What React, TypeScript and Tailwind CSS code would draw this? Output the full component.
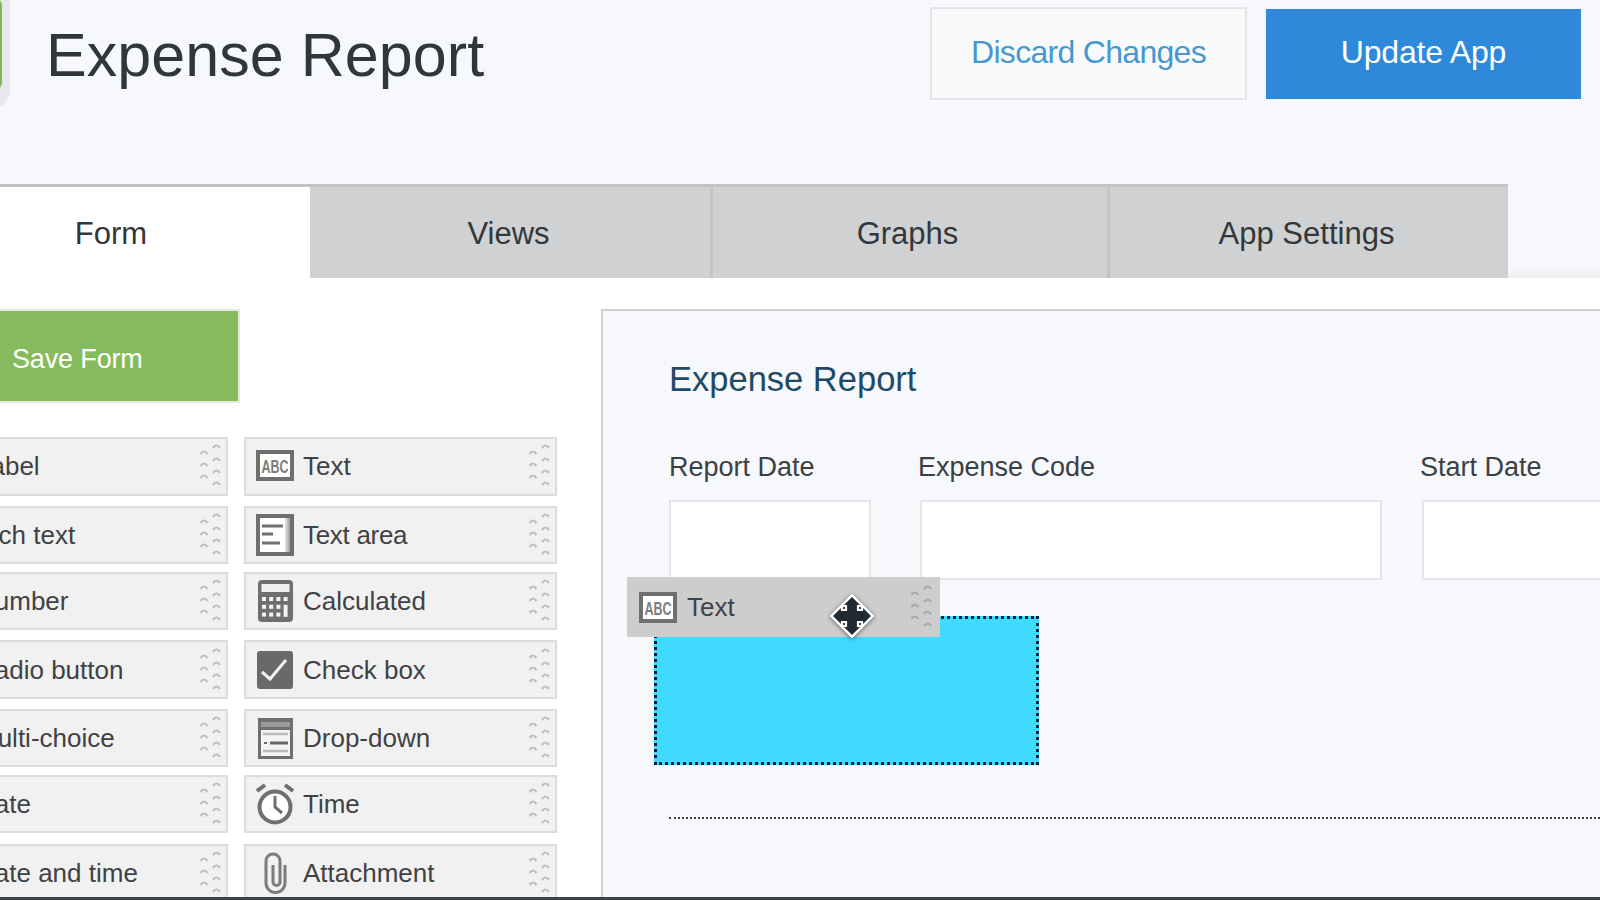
import React from "react";

const Grip = ({ dark }: { dark?: boolean }) => (
  <svg width="21" height="46" viewBox="0 0 21 46" fill="none" stroke={dark ? "#a9a9a9" : "#bfbfbf"} strokeWidth="2.2" className="shrink-0 blur-[0.3px]">
    <path d="M0.500 11 Q4 6 7.500 11M0.500 23 Q4 18 7.500 23M0.500 35 Q4 30 7.500 35M13 5 Q16.500 0 20 5M13 18 Q16.500 13 20 18M13 30 Q16.500 25 20 30M13 42 Q16.500 37 20 42" />
  </svg>
);

const AbcIcon = () => (
  <svg width="38" height="31" viewBox="0 0 38 31">
    <rect x="2" y="2" width="34" height="27" fill="#fff" stroke="#6f6f6f" strokeWidth="4" />
    <text x="19" y="22.500" textAnchor="middle" fontFamily="'Liberation Sans', sans-serif" fontWeight="700" fontSize="18" textLength="27" lengthAdjust="spacingAndGlyphs" fill="#7d7d7d">ABC</text>
  </svg>
);

const TextAreaIcon = () => (
  <svg width="38" height="42" viewBox="0 0 38 42">
    <defs>
      <linearGradient id="ta" x1="0" x2="1" y1="0" y2="0">
        <stop offset="0" stopColor="#e8e8e8" />
        <stop offset="1" stopColor="#9a9a9a" />
      </linearGradient>
    </defs>
    <rect x="2" y="2" width="34" height="38" fill="#fff" stroke="#6f6f6f" strokeWidth="4" />
    <rect x="29" y="4" width="5" height="34" fill="url(#ta)" />
    <path d="M6 12H27M6 20H17M6 29H24" stroke="#6f6f6f" strokeWidth="3" />
  </svg>
);

const CalcIcon = () => {
  const dots: React.ReactNode[] = [];
  for (let r = 0; r < 3; r++)
    for (let c = 0; c < 4; c++) {
      if (c === 3 && r > 0) continue;
      dots.push(<rect key={`${r}-${c}`} x={4 + c * 7.2} y={17 + r * 7.8} width="4" height="4" fill="#f4f4f4" />);
    }
  return (
    <svg width="35" height="42" viewBox="0 0 35 42">
      <rect width="35" height="42" rx="4" fill="#6f6f6f" />
      <rect x="3.500" y="4" width="28" height="8" fill="#f0f0f0" />
      {dots}
      <rect x="25.600" y="24.800" width="4" height="12" fill="#f4f4f4" />
    </svg>
  );
};

const CheckIcon = () => (
  <svg width="36" height="38" viewBox="0 0 36 38">
    <rect width="36" height="38" rx="3" fill="#696969" />
    <path d="M5 21L13 28L29 9" stroke="#f2f2f2" strokeWidth="3" fill="none" />
  </svg>
);

const DropIcon = () => (
  <svg width="35" height="41" viewBox="0 0 35 41">
    <rect width="35" height="41" fill="#6f6f6f" />
    <rect x="3" y="4" width="29" height="5" fill="#999" />
    <rect x="3" y="12" width="29" height="26" fill="#f4f4f4" />
    <path d="M5 16H30M5 33H30" stroke="#bbb" strokeWidth="2.500" />
    <path d="M12 25H30" stroke="#666" strokeWidth="3" />
    <path d="M6 25H9" stroke="#666" strokeWidth="2" />
  </svg>
);

const ClockIcon = () => (
  <svg width="38" height="42" viewBox="0 0 38 42" fill="none" stroke="#6f6f6f">
    <circle cx="19" cy="24" r="15.500" fill="#fff" strokeWidth="4" />
    <path d="M19 13V24L26 30" strokeWidth="3" />
    <path d="M1 8L9 2M37 8L29 2" strokeWidth="4" />
  </svg>
);

const ClipIcon = () => (
  <svg width="23" height="42" viewBox="0 0 23 42" fill="none" stroke="#7c7c7c" strokeWidth="3">
    <path d="M9 13V30A3.500 3.500 0 0 0 16 30V9A7 7 0 0 0 2 9V31A9.500 9.500 0 0 0 21 31V13" />
  </svg>
);

type Item = { label: string; icon?: React.ReactNode; className: string; textClass?: string };

const left: Item[] = [
  { label: "Label", className: "mt-0 h-[59px] pb-[2px]" },
  { label: "Rich text", className: "mt-[10px] h-[58px]", textClass: "-translate-x-[2px]" },
  { label: "Number", className: "mt-[8px] h-[58px]" },
  { label: "Radio button", className: "mt-[10px] h-[59px]" },
  { label: "Multi-choice", className: "mt-[10px] h-[58px]" },
  { label: "Date", className: "mt-[8px] h-[58px]" },
  { label: "Date and time", className: "mt-[11px] h-[58px]" },
];

const right: Item[] = [
  { label: "Text", icon: <AbcIcon />, className: "mt-0 h-[59px] pb-[2px]" },
  { label: "Text area", icon: <TextAreaIcon />, className: "mt-[10px] h-[58px]", textClass: "tracking-[-0.3px]" },
  { label: "Calculated", icon: <CalcIcon />, className: "mt-[8px] h-[58px]" },
  { label: "Check box", icon: <CheckIcon />, className: "mt-[10px] h-[59px]" },
  { label: "Drop-down", icon: <DropIcon />, className: "mt-[10px] h-[58px]" },
  { label: "Time", icon: <ClockIcon />, className: "mt-[8px] h-[58px]" },
  { label: "Attachment", icon: <ClipIcon />, className: "mt-[11px] h-[58px]" },
];

const PaletteItem = ({ item }: { item: Item }) => (
  <div className={`flex shrink-0 items-center border-2 border-[#dcdcdc] bg-[#f1f1f1] pl-[10px] pr-[5px] ${item.className}`}>
    <div className="flex w-[38px] shrink-0 justify-center">{item.icon}</div>
    <span className={`ml-[9px] flex-1 whitespace-nowrap text-[26px] leading-none text-[#3f4244] ${item.textClass ?? ""}`}>{item.label}</span>
    <Grip />
  </div>
);

const Field = ({ label, className, labelClass }: { label: string; className: string; labelClass: string }) => (
  <div className={`flex shrink-0 flex-col ${className}`}>
    <div className={`h-[34px] whitespace-nowrap text-[27px] leading-[34px] text-[#3c4043] ${labelClass}`}>{label}</div>
    <div className="mt-[16px] h-[80px] border-2 border-[#e4e6e9] bg-white" />
  </div>
);

export default function App() {
  return (
    <div className="relative flex h-[900px] w-[1600px] flex-col overflow-hidden bg-[#f6f8fb] font-['Liberation_Sans',Arial,sans-serif]">
      {/* Header */}
      <header className="flex h-[184px] shrink-0 items-start">
        <div className="-ml-[70px] -mt-[20px] flex h-[128px] w-[80px] shrink-0 items-center justify-end rounded-[18px] bg-[#e6e8ea] pr-[8px]">
          <div className="h-[90px] w-[40px] rounded-[6px] bg-[#7fb955]" />
        </div>
        <h1 className="ml-[36px] mt-[25px] whitespace-nowrap text-[61px] font-normal leading-[60px] tracking-[0.05px] text-[#30363b]">Expense Report</h1>
        <div className="ml-auto mr-[19px] mt-[7px] flex items-center gap-[19px]">
          <button className="h-[93px] w-[317px] border-2 border-[#e3e5e8] bg-[#f8fafc] pb-[4px] text-[32px] tracking-[-0.7px] text-[#4898cf]">Discard Changes</button>
          <button className="h-[90px] w-[315px] bg-[#2f89da] pb-[4px] text-[32px] tracking-[-0.2px] text-white">Update App</button>
        </div>
      </header>

      {/* Tabs */}
      <nav className="flex h-[94px] shrink-0 text-[31px] text-[#33373a]">
        <div className="flex w-[310px] items-center justify-center border-t-[3px] border-[#c0c2c3] bg-white pr-[88px] pt-[3px]">Form</div>
        <div className="flex w-[400px] items-center justify-center border-t-[3px] border-[#c0c2c3] bg-[#d0d1d2] pr-[3px] pt-[3px]">Views</div>
        <div className="flex w-[397px] items-center justify-center border-t-[3px] border-l-[3px] border-[#c3c4c5] bg-[#d0d1d2] pr-[5px] pt-[3px]">Graphs</div>
        <div className="flex w-[401px] items-center justify-center border-t-[3px] border-l-[3px] border-[#c3c4c5] bg-[#d0d1d2] pr-[5px] pt-[3px]">App Settings</div>
        <div className="h-[10px] flex-1 self-end bg-gradient-to-b from-[#f6f8fb] to-[#eceeef]" />
      </nav>

      {/* Body */}
      <main className="flex min-h-0 flex-1 bg-white pt-[31px]">
        {/* Palette */}
        <aside className="flex w-[601px] shrink-0 flex-col">
          <button className="flex h-[94px] w-[240px] shrink-0 items-center border-2 border-l-0 border-[#e4ebde] bg-[#85bb5d] pl-[12px] pt-[6px] text-[27px] tracking-[-0.15px] text-white">Save Form</button>
          <div className="ml-[-83px] mt-[34px] flex gap-[16px]">
            <div className="flex w-[311px] shrink-0 flex-col">
              {left.map((i) => (
                <PaletteItem key={i.label} item={i} />
              ))}
            </div>
            <div className="flex w-[313px] shrink-0 flex-col">
              {right.map((i) => (
                <PaletteItem key={i.label} item={i} />
              ))}
            </div>
          </div>
        </aside>

        {/* Form panel */}
        <section className="min-w-0 flex-1 border-l-2 border-t-2 border-[#cfd1d3] bg-[#f6f8fb] pl-[66px]">
          <h2 className="mt-[48px] h-[40px] whitespace-nowrap text-[34.500px] font-normal leading-[40px] text-[#1f4a66]">Expense Report</h2>
          <div className="mt-[51px] flex">
            <Field label="Report Date" className="w-[202px]" labelClass="" />
            <Field label="Expense Code" className="ml-[49px] w-[462px]" labelClass="-ml-[2px]" />
            <Field label="Start Date" className="ml-[40px] w-[300px]" labelClass="-ml-[2px]" />
          </div>
          <div className="-ml-[15px] mt-[36px] h-[149px] w-[385px] border-[3px] border-dotted border-[#08233a] bg-[#40daff]" />
          <div className="mt-[52px] border-t-2 border-dotted border-[#3a3f44]" />
        </section>
      </main>

      {/* Dark strip at the bottom edge */}
      <div className="absolute inset-x-0 bottom-0 h-[3px] bg-[#3f4244]" />

      {/* Dragged field */}
      <div className="absolute left-[627px] top-[577px] flex h-[60px] w-[313px] items-center bg-[#cdcdcd] pl-[12px] pr-[8px]">
        <div className="flex w-[38px] shrink-0 justify-center"><AbcIcon /></div>
        <span className="ml-[10px] flex-1 text-[26px] leading-none text-[#3f4244]">Text</span>
        <Grip dark />
      </div>

      {/* Move cursor */}
      <svg className="absolute left-[829px] top-[593px] drop-shadow-[0_1px_2px_rgba(0,0,0,0.5)]" width="46" height="46" viewBox="0 0 46 46">
        <path d="M23 1L45 23L23 45L1 23Z" fill="#fff" stroke="#fff" strokeLinejoin="round" strokeWidth="1" />
        <path d="M23 4L42 23L23 42L4 23Z" fill="#1f2a33" />
        <path d="M13 13h4v4h-4zM29 13h4v4h-4zM13 29h4v4h-4zM29 29h4v4h-4z" fill="#1f2a33" stroke="#fff" strokeWidth="2.200" />
      </svg>
    </div>
  );
}
